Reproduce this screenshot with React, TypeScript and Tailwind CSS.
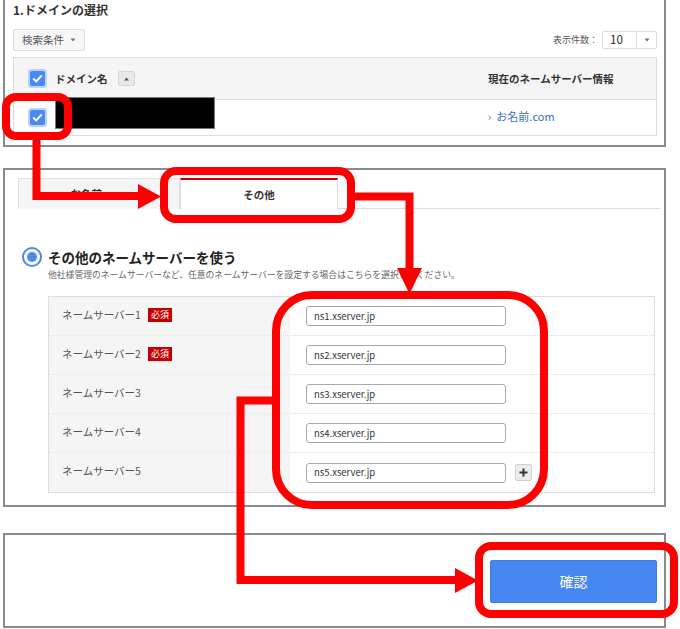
import React from 'react'

const FONT = { fontFamily: '"Noto Sans CJK JP", "Noto Sans", "Liberation Sans", sans-serif' }

const servers = [
  { label: 'ネームサーバー1', value: 'ns1.xserver.jp', required: true },
  { label: 'ネームサーバー2', value: 'ns2.xserver.jp', required: true },
  { label: 'ネームサーバー3', value: 'ns3.xserver.jp', required: false },
  { label: 'ネームサーバー4', value: 'ns4.xserver.jp', required: false },
  { label: 'ネームサーバー5', value: 'ns5.xserver.jp', required: false },
]

function Check() {
  return (
    <div className="w-[19px] h-[19px] rounded-[3px] bg-[#b9d3fb] p-[2px]">
      <div className="w-full h-full rounded-[2px] bg-[#4a89f3] flex items-center justify-center">
        <svg width="11" height="9" viewBox="0 0 11 9">
          <path d="M1.2 4.6 L4.2 7.4 L9.8 1.4" fill="none" stroke="#fff" strokeWidth="2" />
        </svg>
      </div>
    </div>
  )
}

function Caret() {
  return (
    <svg width="6" height="4" viewBox="0 0 6 4" className="shrink-0">
      <path d="M0.5 0.5 L5.5 0.5 L3 3.5 Z" fill="#777" />
    </svg>
  )
}

function Annotations() {
  const red = '#ff0000'
  return (
    <svg className="absolute inset-0 pointer-events-none" width="680" height="629" viewBox="0 0 680 629">
      <g fill="none" stroke={red} strokeWidth="8" strokeLinejoin="miter">
        <rect x="6" y="97" width="62" height="39" rx="10" />
        <path d="M36.5 136 V196 H140" />
        <rect x="164" y="171" width="187" height="48" rx="12" />
        <path d="M351 196.5 H409.5 V270" />
        <rect x="276" y="295" width="268" height="210" rx="36" />
        <path d="M276 400.5 H240.5 V580 H457" />
        <rect x="479" y="546" width="195" height="68" rx="12" />
      </g>
      <g fill={red}>
        <polygon points="138,184 161,196.5 138,209" />
        <polygon points="397,268 422,268 409.5,294" />
        <polygon points="455,568 478,580.5 455,593" />
      </g>
    </svg>
  )
}

export default function App() {
  return (
    <div style={FONT} className="relative w-[680px] h-[629px] bg-white overflow-hidden text-[#333]">
      {/* 1. domain selection */}
      <div className="ml-[3px] w-[663px] h-[147px] border-x-2 border-b-2 border-[#8a8a8a] pl-[8px] pr-[7px]">
        <div className="h-[29px] pt-[2px] text-[12px] font-bold leading-[16px] text-[#333]">1.ドメインの選択</div>
        <div className="h-[22px] flex items-center justify-between">
          <div className="h-[22px] w-[72px] border border-[#ddd] rounded-[2px] bg-[#f7f7f7] flex items-center justify-center gap-[6px] text-[10.5px] text-[#555]">
            検索条件 <Caret />
          </div>
          <div className="flex items-center gap-[4px]">
            <span className="text-[9px] text-[#555]">表示件数：</span>
            <div className="h-[18px] w-[55px] border border-[#ddd] rounded-[2px] flex">
              <div className="w-[33px] flex items-center pl-[7px] text-[11.5px] text-[#222]">10</div>
              <div className="flex-1 border-l border-[#ddd] flex items-center justify-center">
                <Caret />
              </div>
            </div>
          </div>
        </div>
        <div className="mt-[6px] border border-[#ddd]">
          <div className="h-[42px] bg-[#f5f5f5] border-b border-[#ddd] flex items-center">
            <div className="w-[474px] flex items-center pl-[14px]">
              <Check />
              <span className="ml-[8px] text-[10.5px] font-bold text-[#333]">ドメイン名</span>
              <div className="ml-[10px] w-[17px] h-[15px] rounded-[2px] bg-[#e8e8e8] border border-[#d4d4d4] flex items-center justify-center">
                <svg width="5" height="4" viewBox="0 0 5 4">
                  <path d="M0 3.5 L5 3.5 L2.5 0.5 Z" fill="#555" />
                </svg>
              </div>
            </div>
            <div className="text-[10.5px] font-bold text-[#333]">現在のネームサーバー情報</div>
          </div>
          <div className="relative h-[35px] flex items-center">
            <div className="w-[474px] flex items-center pl-[14px]">
              <Check />
            </div>
            <div className="flex items-center gap-[5px] text-[11px] text-[#3b6cb4] -mt-[2px]">
              <span className="text-[#d33] text-[11px]">›</span>お名前.com
            </div>
            <div className="absolute left-[41px] top-[-3px] w-[160px] h-[32px] bg-black border border-[#777]" />
          </div>
        </div>
      </div>

      {/* 2. name server settings */}
      <div className="mt-[21px] ml-[3px] w-[663px] h-[339px] border-2 border-[#8a8a8a]">
        <div className="mt-[8px] ml-[13px] mr-[4px] flex border-b border-[#ddd] h-[31px]">
          <div className="w-[162px] h-[31px] bg-[#f5f5f5] border-t border-x border-[#e2e2e2] flex items-center justify-center text-[10.5px] font-bold text-[#333]">
            お名前.com
          </div>
          <div className="w-[158px] h-[31px] bg-white border-t-2 border-t-[#d40000] border-x border-x-[#ddd] flex items-center justify-center text-[10.5px] font-bold text-[#333]">
            その他
          </div>
        </div>

        <div className="mt-[38px] ml-[17px] flex items-center gap-[6px]">
          <div className="w-[20px] h-[20px] rounded-full border-2 border-[#4a89f3] flex items-center justify-center">
            <div className="w-[10px] h-[10px] rounded-full bg-[#4a89f3]" />
          </div>
          <div className="text-[13.5px] leading-[20px] font-bold text-[#222]">その他のネームサーバーを使う</div>
        </div>
        <div className="ml-[43px] mt-[1px] text-[8.8px] leading-[14px] text-[#666]">
          他社様管理のネームサーバーなど、任意のネームサーバーを設定する場合はこちらを選択してください。
        </div>

        <div className="ml-[43px] mt-[14px] w-[607px] border border-[#ddd]">
          {servers.map((s, i) => (
            <div
              key={s.label}
              className={`h-[39px] flex ${i < servers.length - 1 ? 'border-b border-dotted border-[#ddd]' : ''}`}
            >
              <div className="w-[241px] bg-[#f5f5f5] flex items-center pl-[13px] pb-[3px] text-[10.5px] text-[#555]">
                {s.label}
                {s.required && (
                  <span className="ml-[7px] px-[3px] h-[14px] leading-[14px] bg-[#c40000] text-white text-[9px]">必須</span>
                )}
              </div>
              <div className="flex-1 flex items-center pl-[16px]">
                <div className="w-[200px] h-[20px] border border-[#a9a9a9] rounded-[3px] flex items-center px-[7px] text-[9.5px] text-[#333]">
                  {s.value}
                </div>
                {i === servers.length - 1 && (
                  <div className="ml-[9px] w-[17px] h-[17px] rounded-[2px] bg-[#ececec] border border-[#d0d0d0] flex items-center justify-center">
                    <svg width="9" height="9" viewBox="0 0 9 9">
                      <path d="M4.5 0.5 V8.5 M0.5 4.5 H8.5" stroke="#333" strokeWidth="2" />
                    </svg>
                  </div>
                )}
              </div>
            </div>
          ))}
        </div>
      </div>

      {/* 3. confirm */}
      <div className="mt-[26px] ml-[3px] w-[663px] h-[95px] border-2 border-[#8a8a8a] flex justify-end pt-[25px] pr-[7px]">
        <button className="w-[167px] h-[43px] rounded-[2px] bg-[#4688f1] border border-[#3f7de0] text-white text-[14px]">
          確認
        </button>
      </div>

      <Annotations />
    </div>
  )
}
